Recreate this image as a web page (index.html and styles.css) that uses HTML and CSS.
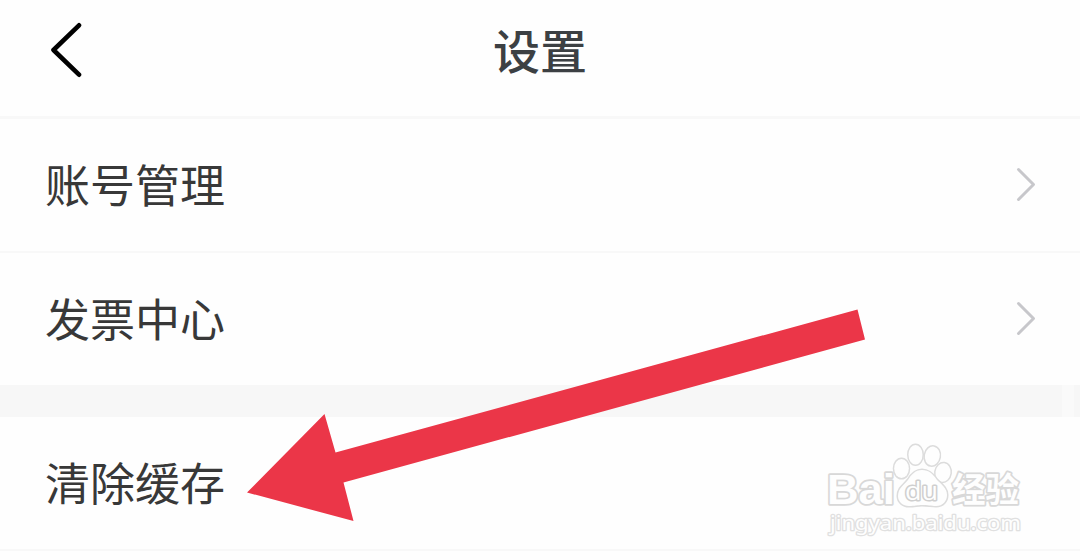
FILE: index.html
```html
<!DOCTYPE html>
<html lang="zh-CN">
<head>
<meta charset="utf-8">
<title>设置</title>
<link rel="stylesheet" href="styles.css">
</head>
<body>
<main class="screen">
  <header class="header">
    <svg class="back" viewBox="0 0 34 58" aria-hidden="true"><path d="M31 5.300 5.500 30 31 54.700"/></svg>
    <h1 class="title">设置</h1>
  </header>
  <section class="group">
    <div class="row"><span class="label">账号管理</span><svg class="chevron" viewBox="0 0 20 36" aria-hidden="true"><path d="M2.500 2.500 17.500 17.500 2.500 32.500"/></svg></div>
    <div class="row"><span class="label">发票中心</span><svg class="chevron" viewBox="0 0 20 36" aria-hidden="true"><path d="M2.500 2.500 17.500 17.500 2.500 32.500"/></svg></div>
  </section>
  <div class="gap"><span class="gap-light"></span></div>
  <section class="group">
    <div class="row row-cache"><span class="label">清除缓存</span></div>
  </section>
  <svg class="pointer" viewBox="0 0 1080 560" aria-hidden="true"><path d="M247 492.500 324.500 414 335.500 452.500 857.500 309.500 865 339.500 343.500 482.500 353.500 521Z"/></svg>
  <svg class="watermark" viewBox="820 430 220 120">
    <g class="outline">
      <text class="bai" x="827" y="504" textLength="68" lengthAdjust="spacingAndGlyphs">Bai</text>
      <ellipse cx="901.500" cy="468.500" rx="7.300" ry="9.500"/>
      <ellipse cx="915.500" cy="454.800" rx="7" ry="9.800"/>
      <ellipse cx="932.300" cy="456" rx="7.400" ry="9.500" transform="rotate(10 932.300 456)"/>
      <ellipse cx="943" cy="472.500" rx="7.500" ry="9.300" transform="rotate(8 943 472.500)"/>
      <path d="M922 470C915 470 911 475 908 480 904 485 898 488 898 496 898 502 903 506 909 506 915 506 917 505 922 505 928 505 931 506 936 506 943 506 947 501 947 495 947 488 941 484 937 480 933 474 929 470 922 470Z"/>
      <text class="du" x="905" y="499.500" textLength="33" lengthAdjust="spacingAndGlyphs">du</text>
      <text class="jingyan" x="952" y="501.500" textLength="67" lengthAdjust="spacingAndGlyphs">经验</text>
      <text class="domain" x="830" y="530" textLength="191" lengthAdjust="spacingAndGlyphs">jingyan.baidu.com</text>
    </g>
  </svg>
</main>
</body>
</html>
```
FILE: styles.css
```css
* { box-sizing: border-box; }
body { margin: 0; background: #fefefe; font-family: "Noto Sans CJK SC", sans-serif; }
.screen { position: relative; width: 1080px; height: 560px; overflow: hidden; }
.header { display: grid; grid-template-columns: 1fr auto 1fr; align-items: center; height: 119px; padding: 0 48px 18px; border-bottom: 3px solid #f8f8f8; }
.back { width: 34px; height: 58px; fill: none; stroke: #000; stroke-width: 4.600; stroke-linecap: round; stroke-linejoin: round; }
.title { margin: 0; font-size: 47px; line-height: 70px; font-weight: 500; color: #3c4043; }
.row { display: flex; align-items: center; justify-content: space-between; height: 134px; padding: 0 44px 2px 45px; border-bottom: 2px solid #f8f8f8; }
.row + .row { height: 132px; border-bottom: 0; }
.row-cache { height: 134px; }
.label { font-size: 45px; line-height: 66px; font-weight: 400; color: #383838; }
.chevron { position: relative; top: 1px; width: 20px; height: 36px; fill: none; stroke: #c7c7cb; stroke-width: 3; stroke-linecap: round; stroke-linejoin: round; }
.gap { display: flex; justify-content: flex-end; height: 32px; padding-right: 6px; background: #f7f7f7; }
.gap-light { width: 12px; background: #fafafa; }
.pointer { position: absolute; inset: 0; width: 1080px; height: 560px; fill: #eb3648; }
.watermark { position: absolute; left: 820px; top: 430px; width: 220px; height: 120px; }
.outline { fill: #fefefe; stroke: #d6d6d6; stroke-width: 1.500; stroke-linejoin: round; paint-order: stroke; }
.outline ellipse, .outline path { stroke-width: 3; stroke: #dcdcdc; }
.bai { font: bold 43px "Liberation Sans", sans-serif; stroke-width: 3.500; stroke: #d8d8d8; }
.du { font: 25px "Open Sans", sans-serif; stroke-width: 3; stroke: #cfcfcf; }
.jingyan { font: 700 34px "Noto Sans CJK SC", sans-serif; stroke-width: 3.500; stroke: #d8d8d8; }
.domain { font: 20px "Noto Sans", sans-serif; stroke-width: 2.500; stroke: #e0e0e0; }
```
